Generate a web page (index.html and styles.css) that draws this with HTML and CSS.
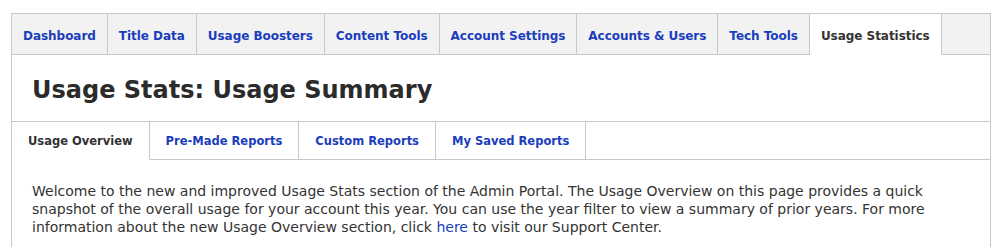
FILE: index.html
```html
<!DOCTYPE html>
<html lang="en">
<head>
    <meta charset="UTF-8">
    <title>Usage Stats: Usage Summary</title>
    <link rel="stylesheet" href="styles.css">
</head>
<body>
    <div class="portal">
        <nav class="main-tabs">
            <a href="#" class="tab">Dashboard</a>
            <a href="#" class="tab">Title Data</a>
            <a href="#" class="tab">Usage Boosters</a>
            <a href="#" class="tab">Content Tools</a>
            <a href="#" class="tab">Account Settings</a>
            <a href="#" class="tab">Accounts &amp; Users</a>
            <a href="#" class="tab">Tech Tools</a>
            <a href="#" class="tab active">Usage Statistics</a>
            <span class="tab-fill"></span>
        </nav>

        <h1 class="page-title">Usage Stats: Usage Summary</h1>

        <nav class="sub-tabs">
            <a href="#" class="sub-tab active">Usage Overview</a>
            <a href="#" class="sub-tab">Pre-Made Reports</a>
            <a href="#" class="sub-tab">Custom Reports</a>
            <a href="#" class="sub-tab">My Saved Reports</a>
            <span class="sub-fill"></span>
        </nav>

        <p class="intro">Welcome to the new and improved Usage Stats section of the Admin Portal. The Usage Overview on this page provides a quick snapshot of the overall usage for your account this year. You can use the year filter to view a summary of prior years. For more information about the new Usage Overview section, click <a href="#">here</a> to visit our Support Center.</p>
    </div>
</body>
</html>
```

FILE: styles.css
```css
body {
    font-family: "DejaVu Sans", Verdana, sans-serif;
    background-color: #fff;
    color: #333;
    margin: 0;
    padding: 13px 0 0 11px;
}
a {
    text-decoration: none;
    color: #1a3dbd;
}
.portal {
    width: 978px;
    border: 1px solid #c8c8c8;
    border-bottom: none;
    height: 240px;
}
.main-tabs {
    display: flex;
    height: 41px;
}
.tab {
    display: flex;
    align-items: center;
    padding: 4px 11px 0;
    font-size: 12px;
    font-weight: bold;
    letter-spacing: -0.04px;
    background-color: #f2f2f2;
    border-right: 1px solid #c8c8c8;
    border-bottom: 1px solid #c8c8c8;
}
.tab.active {
    background-color: #fff;
    color: #333;
    border-bottom-color: #fff;
}
.tab-fill {
    flex: 1;
    background-color: #f2f2f2;
    border-bottom: 1px solid #c8c8c8;
}
.page-title {
    margin: 0;
    padding: 3px 0 0 20px;
    box-sizing: border-box;
    height: 67px;
    display: flex;
    align-items: center;
    font-size: 24px;
    font-weight: bold;
    color: #2b2b2b;
    border-bottom: 1px solid #c8c8c8;
}
.sub-tabs {
    display: flex;
    height: 38px;
}
.sub-tab {
    display: flex;
    align-items: center;
    padding: 0 16px;
    font-size: 11.5px;
    font-weight: bold;
    border-right: 1px solid #c8c8c8;
    border-bottom: 1px solid #c8c8c8;
}
.sub-tab.active {
    color: #333;
    border-bottom-color: #fff;
}
.sub-fill {
    flex: 1;
    border-bottom: 1px solid #c8c8c8;
}
.intro {
    margin: 22px 0 0 20px;
    width: 900px;
    font-size: 14px;
    line-height: 18px;
    color: #333;
}
```
